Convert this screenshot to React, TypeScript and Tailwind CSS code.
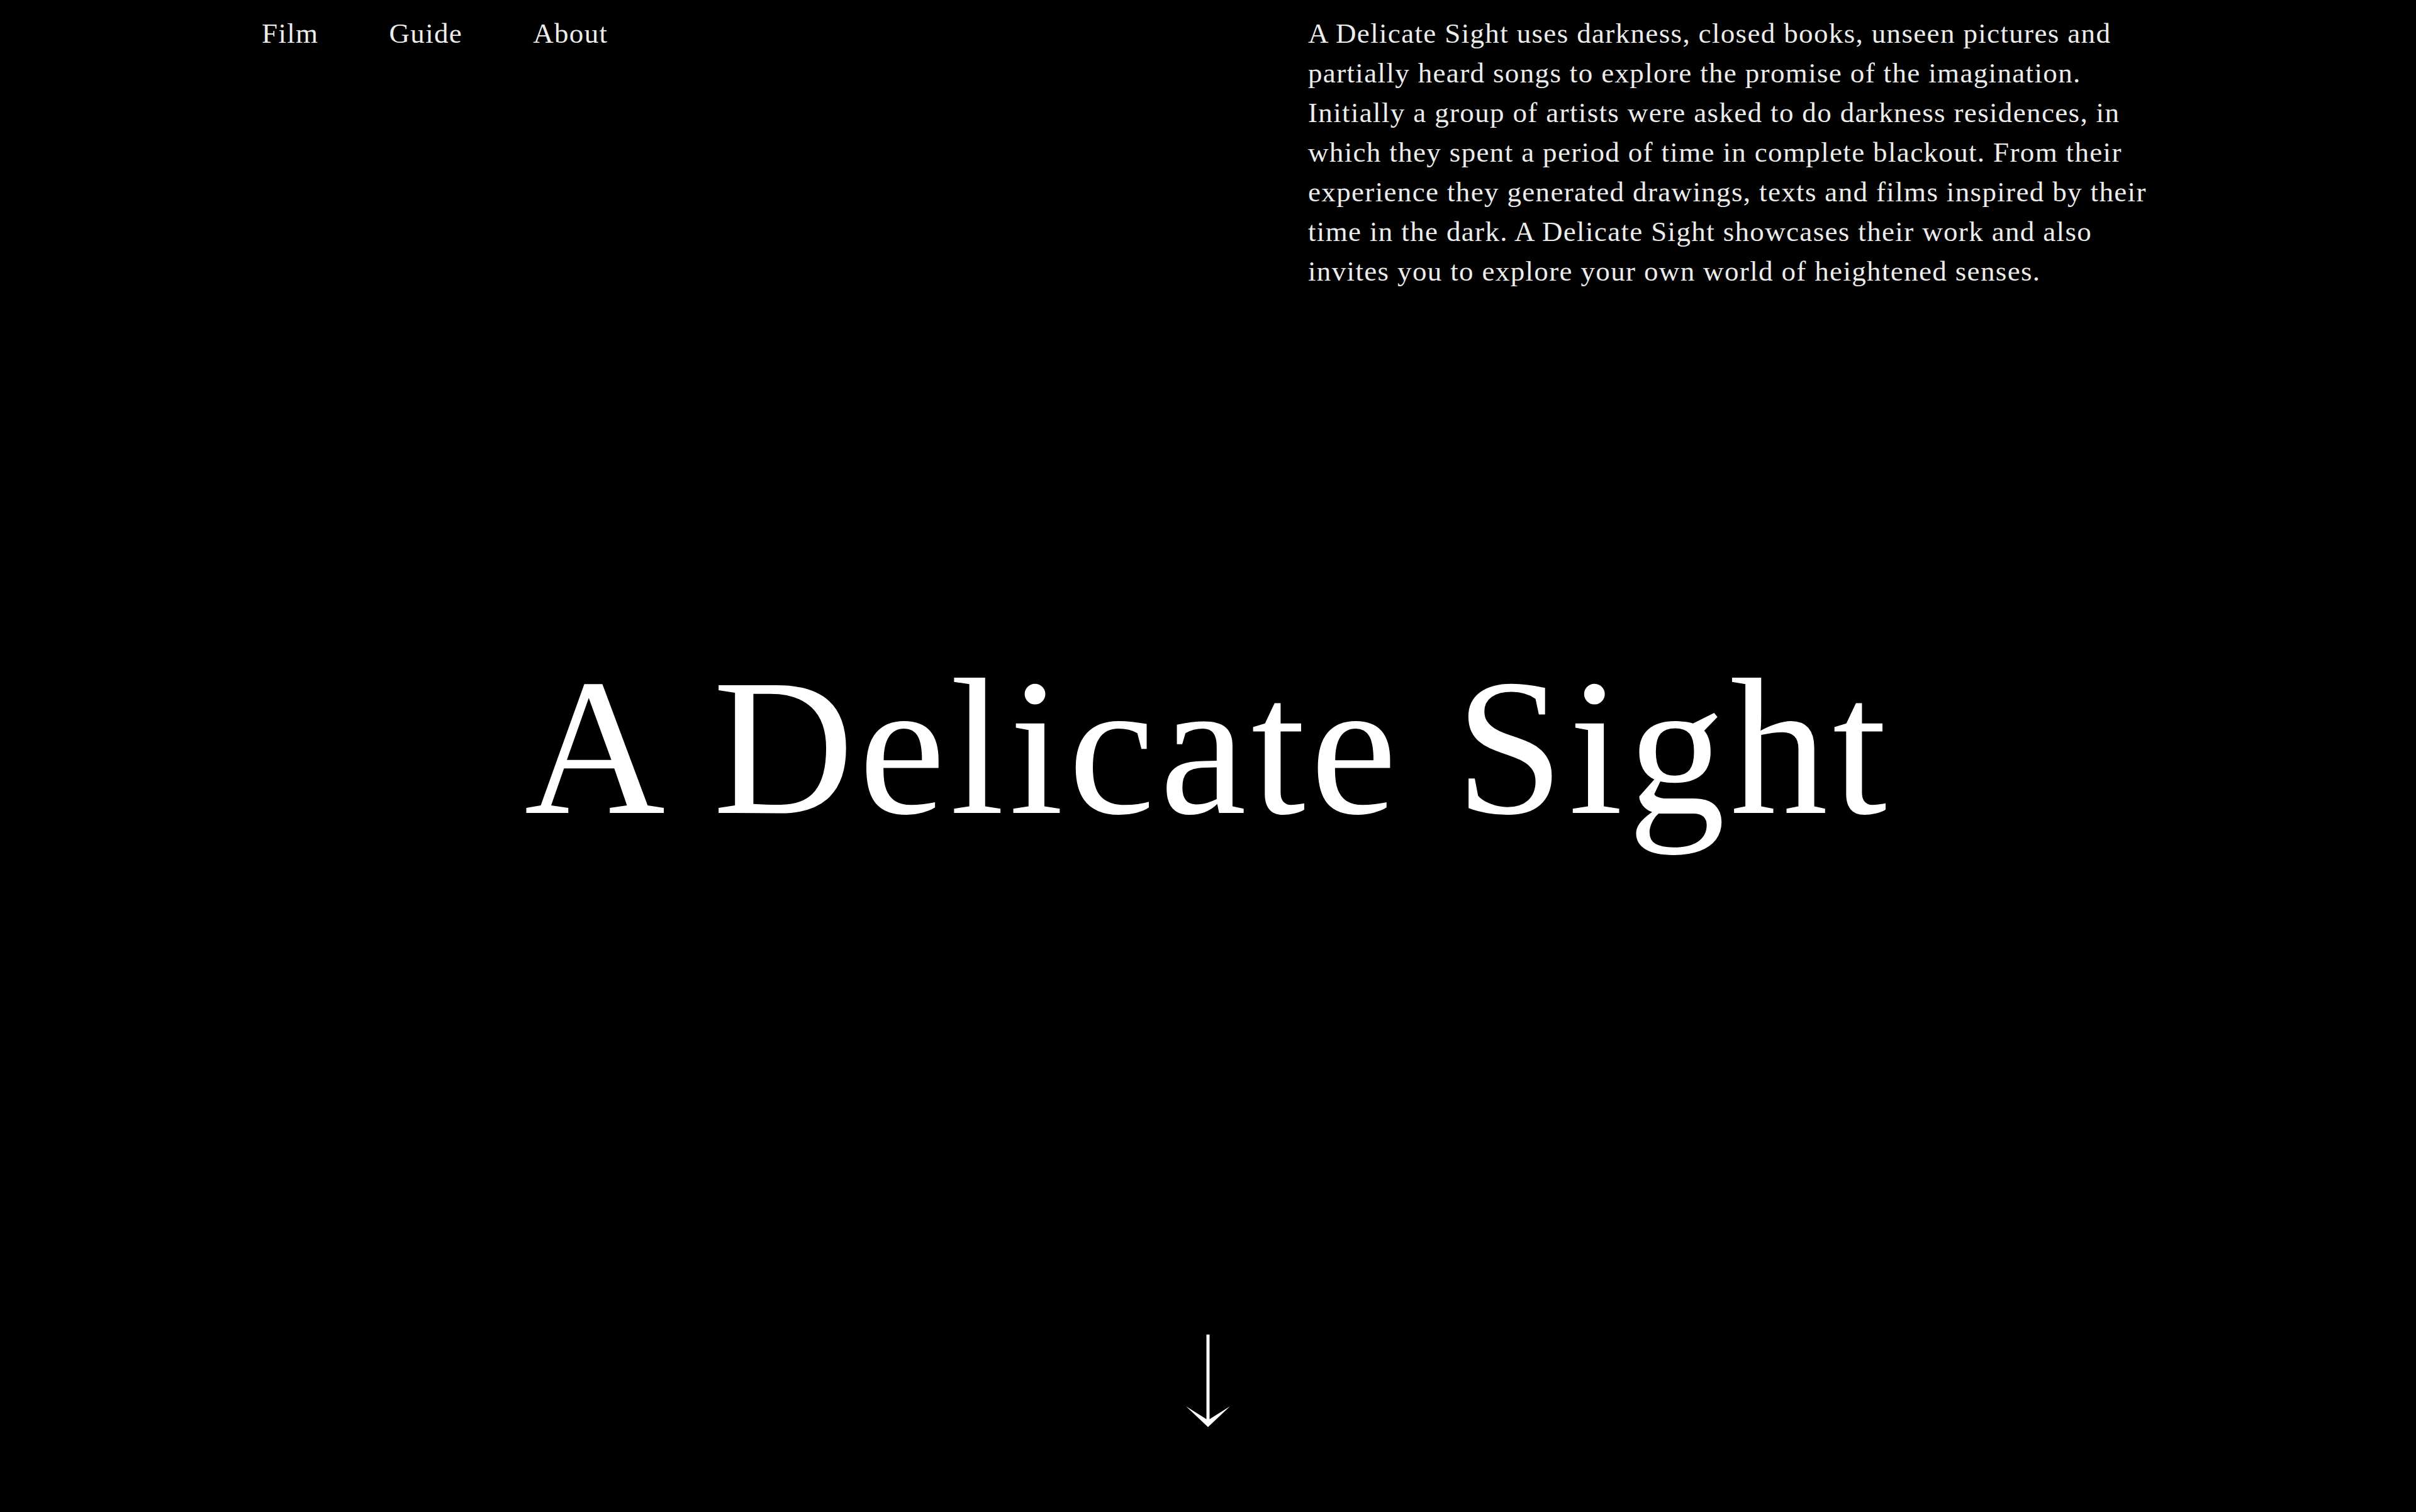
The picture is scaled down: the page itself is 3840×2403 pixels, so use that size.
import React from 'react';

const serif = '"Liberation Serif", "Times New Roman", serif';

const navItems = ['Film', 'Guide', 'About'];

function DownArrow() {
  return (
    <svg width="70" height="148" viewBox="0 0 70 148" fill="white">
      <rect x="32.5" y="0" width="5" height="138" />
      <path d="M0 114 L35 147 L70 114 L35 136 Z" />
    </svg>
  );
}

export default function App() {
  return (
    <div
      className="flex flex-col h-screen w-full bg-black text-white overflow-hidden"
      style={{ fontFamily: serif }}
    >
      <header className="flex justify-between items-start pl-[416px] pr-[410px] pt-[22px]">
        <nav className="flex gap-[112px] text-[45px] leading-[63px] tracking-[0.03em] text-[#ececec]">
          {navItems.map((item) => (
            <a key={item} href="#" className="hover:text-white">
              {item}
            </a>
          ))}
        </nav>
        <p className="w-[1351px] text-[45px] leading-[63px] tracking-[0.03em] text-[#ececec]">
          A Delicate Sight uses darkness, closed books, unseen pictures and
          partially heard songs to explore the promise of the imagination.
          Initially a group of artists were asked to do darkness residences, in
          which they spent a period of time in complete blackout. From their
          experience they generated drawings, texts and films inspired by their
          time in the dark. A Delicate Sight showcases their work and also
          invites you to explore your own world of heightened senses.
        </p>
      </header>

      <main className="mt-[570px] flex justify-center">
        <h1 className="text-[310px] leading-none tracking-[0.025em] text-white">
          A Delicate Sight
        </h1>
      </main>

      <div className="flex-1" />

      <div className="flex justify-center pb-[134px]">
        <DownArrow />
      </div>
    </div>
  );
}
